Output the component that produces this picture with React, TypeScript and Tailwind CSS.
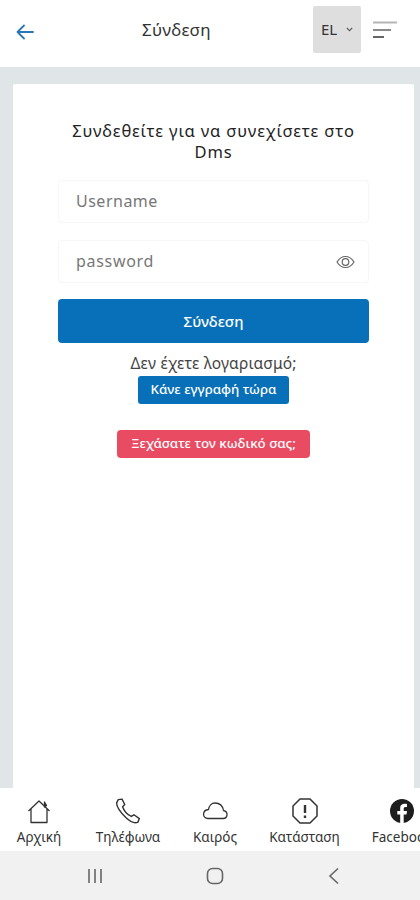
import React from "react";

function NavItem({ icon, label, cls }: { icon: React.ReactNode; label: string; cls: string }) {
  return (
    <div className={"flex flex-col items-center shrink-0 " + cls}>
      <div className="h-[28px] flex items-center justify-center">{icon}</div>
      <span className="text-[13.5px] leading-[18px] mt-[3px] text-[#333] whitespace-nowrap">{label}</span>
    </div>
  );
}

export default function App() {
  return (
    <div className="w-[420px] h-[900px] flex flex-col overflow-hidden bg-white text-[#222]" style={{ fontFamily: '"Noto Sans", "Open Sans", sans-serif' }}>
      <header className="h-[67px] shrink-0 flex items-center bg-white">
        <svg className="ml-[15px] mt-[-4px]" width="20" height="20" viewBox="0 0 20 20" fill="none" stroke="#2a76b4" strokeWidth="1.8" strokeLinecap="round" strokeLinejoin="round">
          <path d="M18 10H2.5M9 3.500 2.500 10 9 16.500" />
        </svg>
        <div className="flex-1 text-center text-[17px] tracking-[0.3px] mt-[-7px] pl-[5px] text-[#333]">Σύνδεση</div>
        <div className="w-[48px] h-[47px] mt-[-8px] rounded-[2px] bg-[#dedede] flex items-center gap-[9px] pl-[8px]">
          <span className="text-[15px] text-[#333]">EL</span>
          <svg width="7" height="5" viewBox="0 0 9 6" fill="none" stroke="#555" strokeWidth="1.400"><path d="M1 1l3.500 3.500L8 1" /></svg>
        </div>
        <svg className="ml-[12px] mr-[23px] mt-[-8px]" width="24" height="18" viewBox="0 0 24 18" fill="none" strokeWidth="2">
          <path d="M0 1.500h24" stroke="#b5b5b5" />
          <path d="M0 9h18" stroke="#8a8a8a" />
          <path d="M0 16h11" stroke="#666" />
        </svg>
      </header>

      <main className="flex-1 min-h-0 bg-[#e0e6e7] pt-[17px] pl-[13px] pr-[6px] flex flex-col">
        <section className="flex-1 bg-white rounded-t-[2px] flex flex-col items-center pt-[36px] px-[45px]">
          <h1 className="text-[16.500px] leading-[21px] text-center font-normal text-[#222] tracking-[0.88px]">
            Συνδεθείτε για να συνεχίσετε στο<br />Dms
          </h1>
          <div className="w-[311px] h-[43px] mt-[18px] pb-[1px] shrink-0 border border-[#f6f6f6] rounded-[4px] flex items-center pl-[17px] text-[16px] tracking-[0.5px] text-[#777]">Username</div>
          <div className="w-[311px] h-[43px] mt-[17px] shrink-0 border border-[#f6f6f6] rounded-[4px] flex items-center justify-between pl-[17px] pr-[13px] text-[16px] tracking-[0.7px] text-[#777]">
            <span className="mt-[-2px]">password</span>
            <svg width="19" height="14" viewBox="0 0 19 14" fill="none" stroke="#666" strokeWidth="1.2">
              <path d="M1 7c2.300-3.700 5-5.500 8.500-5.500S15.700 3.300 18 7c-2.300 3.700-5 5.500-8.500 5.500S3.300 10.700 1 7Z" />
              <circle cx="9.500" cy="7" r="3.300" />
            </svg>
          </div>
          <button className="w-[311px] h-[44px] mt-[16px] shrink-0 rounded-[4px] bg-[#0870b9] text-white text-[15px] font-medium">Σύνδεση</button>
          <p className="text-[15.500px] leading-[20px] mt-[10px] text-[#444] tracking-[0.2px]">Δεν έχετε λογαριασμό;</p>
          <button className="h-[28px] px-[13px] mt-[3px] rounded-[3px] bg-[#0870b9] text-white text-[13.300px] font-medium">Κάνε εγγραφή τώρα</button>
          <button className="h-[28px] px-[14px] mt-[26px] rounded-[4px] bg-[#e94b63] text-white text-[13.300px] font-medium">Ξεχάσατε τον κωδικό σας;</button>
        </section>
      </main>

      <nav className="h-[63px] shrink-0 bg-white flex items-start pt-[9px] overflow-hidden">
        <NavItem cls="ml-[17px] w-[44px]" label="Αρχική" icon={
          <svg width="24" height="25" viewBox="0 0 24 25" fill="none" stroke="#333" strokeWidth="1.300" strokeLinejoin="round"><path d="M1.500 12 12 2l10.500 10M4 10v13.500h16V10" /><path d="M17.500 3v5l2-1.500z" fill="#333" /></svg>
        } />
        <NavItem cls="ml-[34px] w-[66px]" label="Τηλέφωνα" icon={
          <svg width="26" height="26" viewBox="0 0 24 24" fill="none" stroke="#333" strokeWidth="1.300" strokeLinecap="round" strokeLinejoin="round"><path d="M3 1.500 6.500 1 9 6 7 8c1 3 4 7 8 9l2.500-1.500 5 3.500-1.500 3.500c-3 1-7-.5-11-4.500S1.500 8 1.500 4.500Z" /></svg>
        } />
        <NavItem cls="ml-[32px] w-[44px]" label="Καιρός" icon={
          <svg width="26" height="18" viewBox="0 0 26 18" fill="none" stroke="#333" strokeWidth="1.300" strokeLinejoin="round"><path d="M6 16.500h15c5 0 5.500-7 .5-8C20.500 3 17 1 13 1 9.500 1 7 4 6.500 7.500 0 8 0 16.500 6 16.500Z" /></svg>
        } />
        <NavItem cls="ml-[33px] w-[69px]" label="Κατάσταση" icon={
          <svg width="26" height="26" viewBox="0 0 26 26" fill="none" stroke="#333" strokeWidth="1.500"><path d="M8 1h10l7 7v10l-7 7H8l-7-7V8Z" /><path d="M13 7v8" strokeWidth="2.400" /><path d="M13 17.500v2.500" strokeWidth="2.400" /></svg>
        } />
        <NavItem cls="ml-[32px] w-[62px]" label="Facebook" icon={
          <svg width="24" height="24" viewBox="0 0 24 24"><circle cx="12" cy="12" r="12" fill="#1d1d1d" /><path d="M16.500 15.500l.5-3.500h-3.300V9.700c0-1 .5-1.800 1.900-1.800H17V5c-2.800-.5-6.800-.5-6.800 4.200V12H7.300v3.500h2.900V24h3.500v-8.500z" fill="#fff" /></svg>
        } />
      </nav>

      <footer className="h-[49px] shrink-0 bg-[#f1f1f1] flex items-center">
        <svg className="ml-[87px]" width="16" height="16" viewBox="0 0 16 16" stroke="#666" strokeWidth="1.600"><path d="M2 1v14M8 1v14M14 1v14" /></svg>
        <svg className="ml-[103px]" width="18" height="18" viewBox="0 0 18 18" fill="none" stroke="#666" strokeWidth="1.600"><rect x="1.500" y="1.500" width="15" height="15" rx="5" /></svg>
        <svg className="ml-[104px]" width="12" height="18" viewBox="0 0 12 18" fill="none" stroke="#666" strokeWidth="1.600"><path d="M10 1.500 2 9l8 7.500" /></svg>
      </footer>
    </div>
  );
}
